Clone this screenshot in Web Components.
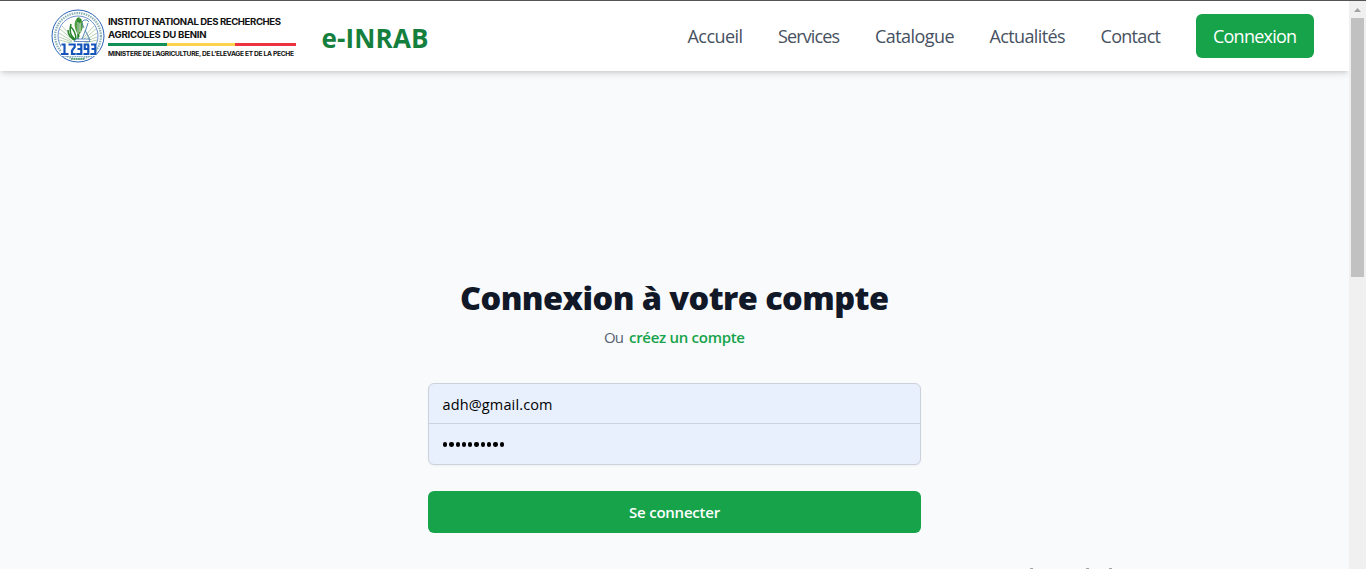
<!DOCTYPE html>
<html lang="fr">
<head>
<meta charset="utf-8">
<title>e-INRAB</title>
<style>
html,body{margin:0;height:100%;overflow:hidden;font-family:"Open Sans","Noto Sans",sans-serif}
</style>
</head>
<body>
<inrab-app></inrab-app>
<script>
const define = (name, html, init) => customElements.define(name, class extends HTMLElement {
  constructor() {
    super();
    this.attachShadow({ mode: 'open' }).innerHTML = html;
  }
  connectedCallback() { if (init) init(this); }
});

/* Text line whose tracking is adjusted so that it fills the given width. */
define('fit-text', `<style>
:host{display:inline-block;white-space:nowrap}
span{display:inline-block}
</style><span><slot></slot></span>`, el => {
  const w = +el.getAttribute('w');
  const s = el.shadowRoot.querySelector('span');
  const n = el.textContent.length;
  el.style.width = w + 'px';
  const stretch = +(el.getAttribute('stretch') || 1);
  s.style.letterSpacing = ((w / stretch - s.getBoundingClientRect().width) / (n - 1)) + 'px';
  if (stretch !== 1) {
    s.style.transformOrigin = '0 50%';
    s.style.transform = 'scaleX(' + stretch + ')';
  }
});

define('inrab-seal', `<style>:host{display:block;width:54px;height:54px}svg{display:block}</style>
<svg width="54" height="54" viewBox="0 0 54 54" fill="none">
<circle cx="27" cy="27" r="26" fill="#fff" stroke="#2b62b5" stroke-width="1"/>
<circle cx="27" cy="27" r="22.9" stroke="#3f7d80" stroke-width="2.2" stroke-dasharray="1.5 .9" opacity=".6"/>
<circle cx="27" cy="27" r="20" fill="#fff" stroke="#2b62b5" stroke-width=".7"/>
<g stroke="#75a96a" stroke-width=".7" opacity=".75">
<path d="M8 24l13 8M8 28l13 5M9 20l13 11M11 17l11 12M8 31l12 3M46 24l-13 8M46 28l-13 5M45 20l-13 11M43 17l-11 12M46 31l-12 3"/></g>
<path d="M28 8c-4 2-5 6-4 11 1 4 3 6 3 8 3-3 5-7 5-11 0-4-2-6-4-8z" fill="#559d43"/>
<path d="M27 9v22M30 10c-4 5-4 11-2 18M20 15c-2 7-1 12 6 17M20 18c4 4 5 8 5 13M17 21c0 6 3 9 9 11" stroke="#26842d" stroke-width="1.5"/>
<path d="M27 13v12M29 14v9" stroke="#fff" stroke-width=".8"/>
<path d="M31 13l2-2h3l2 2M31 14l2 5M37 14l-2 6-4 10M34 21l5 10" stroke="#447da8" stroke-width=".9"/>
<path d="M25 30h13l1 2.500H23z" stroke="#2b62b5" stroke-width=".7" fill="#fff"/>
<path d="M10 34h35v13H10z" fill="#fff"/>
<g stroke="#1555bb" stroke-width="2.200">
<path d="M10.500 35.500H13.500v10M10 45h7.500M17.500 35.500h6.200v2.500L21 41.500V45h3.700M26 35.500h4.300V45h-5M26.500 40h3.800M38 35.500h-4.300v4.500H38M37.300 35.500V45H32.500M40 35.500h4.300V45h-5M40.500 40h3.800"/></g>
<path d="M12 47.500h30" stroke="#7aa4bd" stroke-width=".9" stroke-dasharray="1.5 .8"/>
<path d="M20 50h14" stroke="#3f9b55" stroke-width="1.500" stroke-dasharray="1.5 .8"/>
</svg>`);

define('inrab-logo', `<style>
:host{display:flex;align-items:flex-start;font-family:Inter,"Open Sans",sans-serif;color:#111}
.t{margin:6px 0 0 3px;width:189px;display:flex;flex-direction:column}
fit-text{font:700 8.9px/13px Inter,"Open Sans",sans-serif}
.bar{display:flex;height:3px;margin:2px 0 5px;width:188px}
.bar i:nth-child(1){flex:59;background:#119157}
.bar i:nth-child(2){flex:68;background:#fdd24c}
.bar i:nth-child(3){flex:61;background:#ee3340}
fit-text.s{font-size:6.2px;line-height:8px;position:relative;top:-1px}
</style>
<inrab-seal></inrab-seal>
<div class="t"><fit-text w="173" stretch="1.08">INSTITUT NATIONAL DES RECHERCHES</fit-text><fit-text w="98.5" stretch="1.08">AGRICOLES DU BENIN</fit-text>
<div class="bar"><i></i><i></i><i></i></div>
<fit-text class="s" w="186" stretch="1.08">MINISTERE DE L’AGRICULTURE, DE L’ELEVAGE ET DE LA PECHE</fit-text></div>`);

define('site-header', `<style>
:host{display:flex;box-sizing:border-box;height:70px;background:#fff;padding:0 35px 0 51px;box-shadow:0 4px 6px -1px rgba(0,0,0,.12),0 2px 4px -2px rgba(0,0,0,.12);position:relative}
inrab-logo{margin-top:8px}
.brand{margin:17px 0 0 24.500px;font-weight:700;font-size:26px;line-height:40px;color:#15803d}
nav{margin-left:auto;display:flex;gap:35px;font-size:18px;line-height:44px;color:#465161;margin-top:13px;font-weight:400}
.btn{display:flex;justify-content:center;width:118px;height:44px;border-radius:6px;background:#16a34a;color:#fff;font-weight:400}
</style>
<inrab-logo></inrab-logo>
<fit-text class="brand" w="107">e-INRAB</fit-text>
<nav><fit-text w="55.5">Accueil</fit-text><fit-text w="62">Services</fit-text><fit-text w="79.5">Catalogue</fit-text><fit-text w="76">Actualités</fit-text><fit-text w="60.5">Contact</fit-text>
<div class="btn"><fit-text w="84">Connexion</fit-text></div></nav>`);

define('login-form', `<style>
:host{display:flex;flex-direction:column;align-items:center;width:493px;margin:0 auto;padding-top:205px}
h2{margin:0;font-size:32.5px;line-height:44px;font-weight:800;color:#111827}
p{margin:6px 0 0;display:flex;gap:5px;font-size:15px;line-height:22px;color:#566171}
p .l{color:#16a34a;font-weight:600}
.fields{margin-top:35px;box-sizing:border-box;width:493px;height:82px;border:1px solid #cbd2dc;border-radius:6px;background:#e8f0fe;box-shadow:0 1px 2px rgba(0,0,0,.05);color:#000;font-size:14.5px}
.f{box-sizing:border-box;height:39px;padding-left:13.500px;line-height:41px}
.f+.f{height:41px;border-top:1px solid #cbd2dc;display:flex;align-items:center;gap:2px;padding-left:14px}
.f b{width:4.300px;height:4.300px;border-radius:50%;background:#000;margin-top:1px}
.go{margin-top:26px;width:493px;height:42px;border-radius:6px;background:#16a34a;color:#fff;text-align:center;font-size:15px;font-weight:600;line-height:43px}
</style>
<h2><fit-text w="429">Connexion à votre compte</fit-text></h2>
<p><fit-text w="20">Ou</fit-text><fit-text class="l" w="116">créez un compte</fit-text></p>
<div class="fields"><div class="f"><fit-text w="110">adh@gmail.com</fit-text></div>
<div class="f">${'<b></b>'.repeat(10)}</div></div>
<div class="go"><fit-text w="91">Se connecter</fit-text></div>`);

define('scroll-bar', `<style>
:host{display:flex;flex-direction:column;align-items:center;width:17px;background:#f0f0f0}
svg{display:block}.thumb{width:13px;height:259px;background:#c1c1c1}
</style><svg width="17" height="17"><path d="M5 11l3.5-4 3.5 4z" fill="#a3a3a3"/></svg><div class="thumb"></div>`);

define('inrab-app', `<style>
:host{display:flex;box-sizing:border-box;width:1366px;height:569px;border-top:1px solid #545356;position:relative;overflow:hidden}
main{flex:1;background:#f9fafc;overflow:hidden}
.dots{position:absolute;left:1030px;top:567px;width:82px;height:1px;display:flex}
.dots i{width:3px;height:1px;background:#a5a5a7}
.dots i:nth-child(2){margin-left:53px}.dots i:nth-child(3){margin-left:20px}
</style>
<main><site-header></site-header><login-form></login-form></main><scroll-bar></scroll-bar>
<div class="dots"><i></i><i></i><i></i></div>`);
</script>
</body>
</html>
